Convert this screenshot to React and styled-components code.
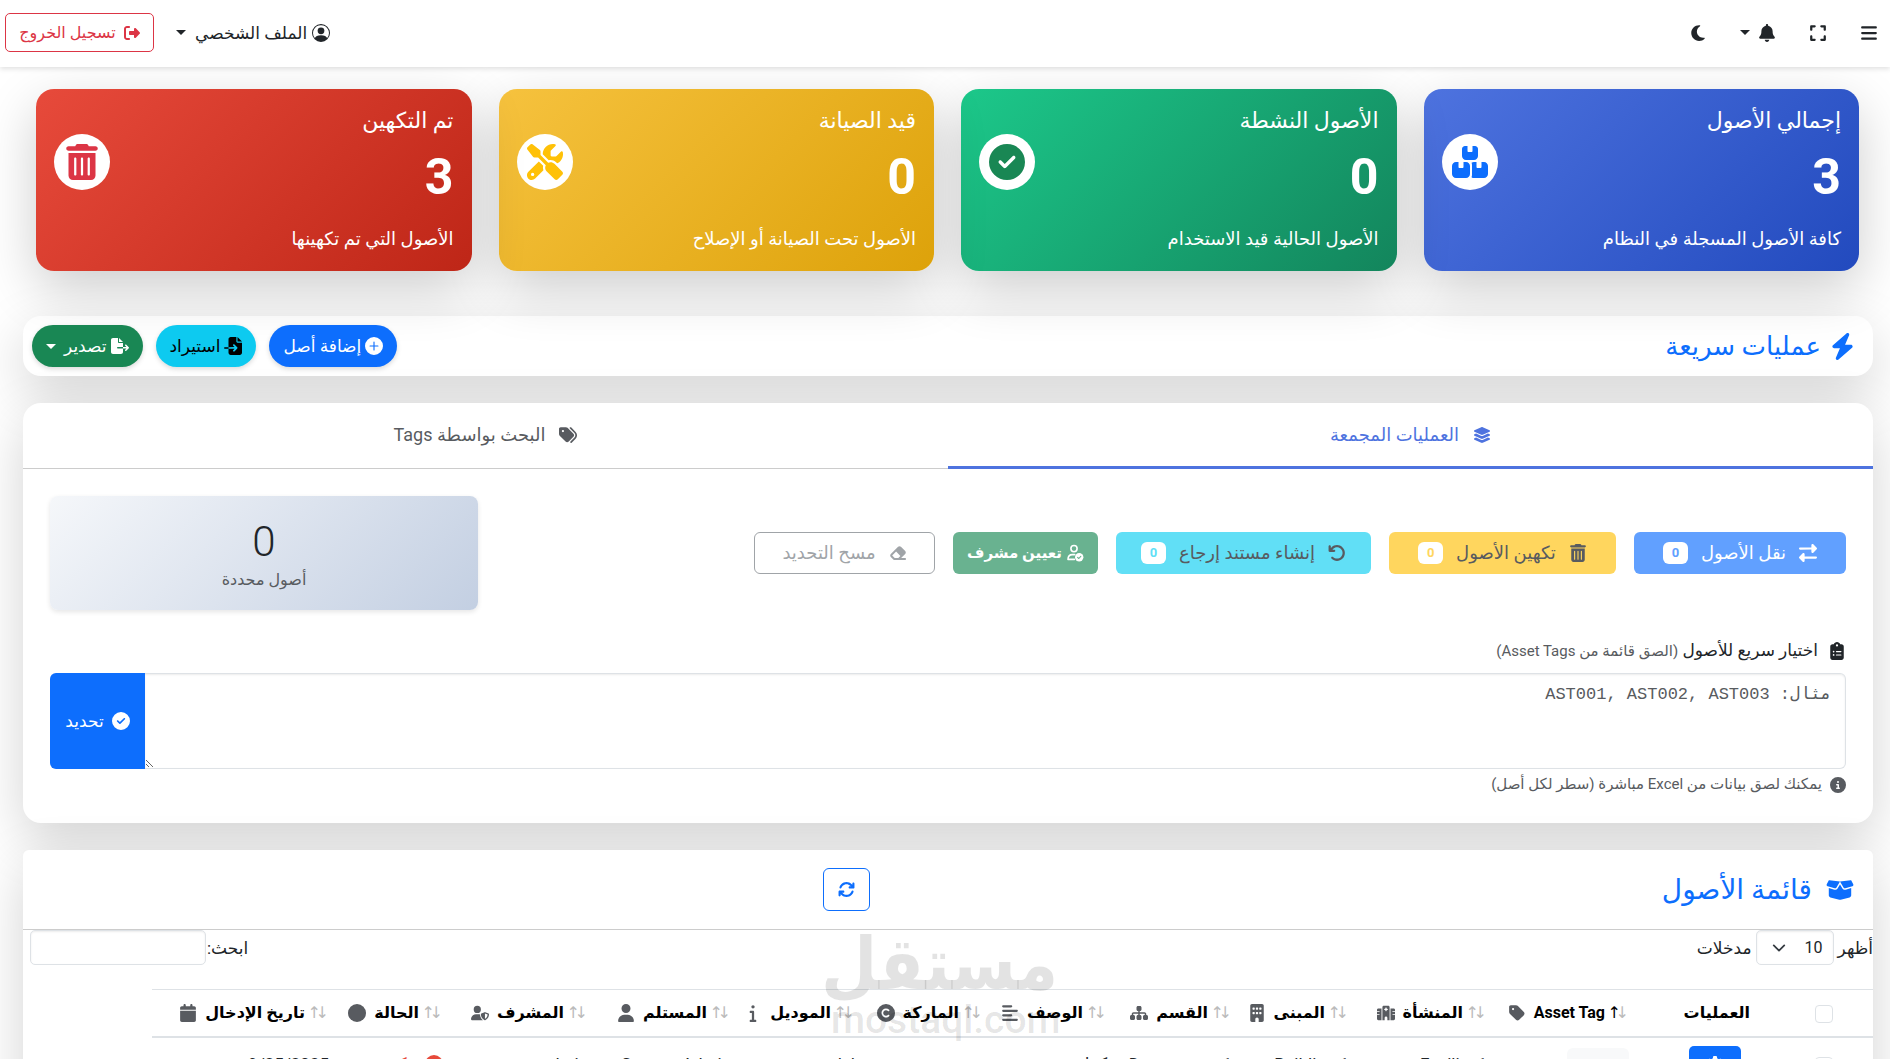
import React, { useState } from 'react';
import styled, { createGlobalStyle, css } from 'styled-components';
import {
  FaArrowRotateLeft, FaArrowsRotate, FaBars, FaBell, FaBolt, FaBoxOpen, FaBoxesStacked,
  FaBuilding, FaCalendar, FaCircle, FaCircleCheck, FaCircleInfo,
  FaClipboardList, FaCopyright, FaEraser, FaExpand, FaFileExport, FaFileImport, FaGear,
  FaHospital, FaInfo, FaLayerGroup, FaMoon, FaRightFromBracket, FaRightLeft, FaScrewdriverWrench,
  FaSitemap, FaTag, FaTags, FaTrashCan, FaUser, FaUserShield, FaAlignLeft,
} from 'react-icons/fa6';
import { BsPersonCircle, BsPlusCircleFill } from 'react-icons/bs';

const GlobalStyle = createGlobalStyle`
  *, *::before, *::after {
    box-sizing: border-box;
  }
  body {
    margin: 0;
    height: 100vh;
    overflow: hidden;
    background: #fff;
    color: #212529;
    font: 17px/24px Roboto, 'DejaVu Sans', sans-serif;
  }
  button, input, select {
    font: inherit;
  }
  svg {
    flex: none;
  }
`;

// outlined user with a filled check badge
function UserCheck({ size }) {
  return (
    <svg width={size} height={size} viewBox="0 0 18 18" fill="none" stroke="currentColor" strokeWidth="1.6" strokeLinecap="round" aria-hidden="true">
      <circle cx="8" cy="4.6" r="3.1" />
      <path d="M8.6 10.6H6.4C3.6 10.6 2 12.4 2 15.4h6.4" strokeLinejoin="round" />
      <circle cx="13.2" cy="13.2" r="4.2" fill="currentColor" stroke="none" />
      <path d="m11.6 13.3 1.2 1.2 2-2.2" stroke="#69b290" strokeWidth="1.1" strokeLinejoin="round" />
    </svg>
  );
}

const stats = [
  { title: 'إجمالي الأصول', value: 3, note: 'كافة الأصول المسجلة في النظام', icon: FaBoxesStacked, color: '#0d6efd', from: '#4e73df', to: '#224abe' },
  { title: 'الأصول النشطة', value: 0, note: 'الأصول الحالية قيد الاستخدام', icon: FaCircleCheck, color: '#198754', from: '#1cc88a', to: '#13855c' },
  { title: 'قيد الصيانة', value: 0, note: 'الأصول تحت الصيانة أو الإصلاح', icon: FaScrewdriverWrench, color: '#ffc107', from: '#f6c23e', to: '#dda20a' },
  { title: 'تم التكهين', value: 3, note: 'الأصول التي تم تكهينها', icon: FaTrashCan, color: '#dc3545', from: '#e74a3b', to: '#be2617' },
];

const bulkActions = [
  { label: 'نقل الأصول', icon: FaRightLeft, bg: '#61a0ff', fg: '#fff', width: 212, count: true },
  { label: 'تكهين الأصول', icon: FaTrashCan, bg: '#ffd65e', fg: '#585b60', width: 227, count: true },
  { label: 'إنشاء مستند إرجاع', icon: FaArrowRotateLeft, bg: '#61dff6', fg: '#585b60', width: 255, count: true },
  { label: 'تعيين مشرف', icon: UserCheck, bg: '#69b290', fg: '#fff', width: 145, bold: true },
  { label: 'مسح التحديد', icon: FaEraser, bg: '#fff', fg: '#a0a4a8', width: 181, outline: true },
];

const columns = [
  { label: 'Asset Tag', icon: FaTag, width: 142, sorted: true },
  { label: 'المنشأة', icon: FaHospital, width: 138 },
  { label: 'المبنى', icon: FaBuilding, width: 117 },
  { label: 'القسم', icon: FaSitemap, width: 125 },
  { label: 'الوصف', icon: FaAlignLeft, width: 124 },
  { label: 'الماركة', icon: FaCopyright, width: 128 },
  { label: 'الموديل', icon: FaInfo, width: 124 },
  { label: 'المستلم', icon: FaUser, width: 143 },
  { label: 'المشرف', icon: FaUserShield, width: 145 },
  { label: 'الحالة', icon: FaCircle, width: 114 },
  { label: 'تاريخ الإدخال', icon: FaCalendar, width: 186 },
];

const row = ['AST001', 'Facility 1', 'Building 1', 'Department 1', 'كراسي', 'test', 'model', 'System Admin', 'admin', 'مكهن', '9/25/2025'];

export default function App() {
  const [tab, setTab] = useState('bulk');
  const [tags, setTags] = useState('');

  return (
    <Page dir="rtl" lang="ar">
      <GlobalStyle />
      <Navbar>
        <NavGroup>
          <IconButton type="button" aria-label="القائمة"><FaBars size={18} /></IconButton>
          <IconButton type="button" aria-label="ملء الشاشة"><FaExpand size={18} /></IconButton>
          <IconButton type="button" aria-label="الإشعارات">
            <FaBell size={18} />
            <Caret />
          </IconButton>
          <IconButton type="button" aria-label="الوضع الليلي"><FaMoon size={18} /></IconButton>
        </NavGroup>
        <ProfileGroup>
          <ProfileButton type="button">
            <BsPersonCircle size={18} />
            الملف الشخصي
            <Caret />
          </ProfileButton>
          <LogoutButton type="button">
            <FaRightFromBracket size={16} />
            تسجيل الخروج
          </LogoutButton>
        </ProfileGroup>
      </Navbar>

      <Main>
        <StatGrid>
          {stats.map(({ icon: Icon, ...s }) => (
            <StatCard key={s.title} $from={s.from} $to={s.to}>
              <div>
                <StatTitle>{s.title}</StatTitle>
                <StatValue>{s.value}</StatValue>
                <StatNote>{s.note}</StatNote>
              </div>
              <StatIcon $color={s.color}><Icon size={36} /></StatIcon>
            </StatCard>
          ))}
        </StatGrid>

        <QuickBar>
          <SectionTitle>
            <FaBolt size={27} />
            عمليات سريعة
          </SectionTitle>
          <QuickActions>
            <PillButton type="button" $bg="#0d6efd" $fg="#fff">
              <BsPlusCircleFill size={18} />
              إضافة أصل
            </PillButton>
            <PillButton type="button" $bg="#0dcaf0" $fg="#000">
              <FaFileImport size={18} />
              استيراد
            </PillButton>
            <PillButton type="button" $bg="#198754" $fg="#fff">
              <FaFileExport size={18} />
              تصدير
              <Caret />
            </PillButton>
          </QuickActions>
        </QuickBar>

        <Panel>
          <Tabs role="tablist">
            <Tab type="button" role="tab" aria-selected={tab === 'bulk'} $active={tab === 'bulk'} onClick={() => setTab('bulk')}>
              <FaLayerGroup size={18} />
              العمليات المجمعة
            </Tab>
            <Tab type="button" role="tab" aria-selected={tab === 'tags'} $active={tab === 'tags'} onClick={() => setTab('tags')}>
              <FaTags size={18} />
              البحث بواسطة Tags
            </Tab>
          </Tabs>

          <PanelBody>
            <BulkRow>
              <BulkActions>
                {bulkActions.map(({ icon: Icon, ...a }) => (
                  <BulkButton key={a.label} type="button" $bg={a.bg} $fg={a.fg} $width={a.width} $outline={a.outline} $bold={a.bold}>
                    <Icon size={18} />
                    <span>{a.label}</span>
                    {a.count && <Count $fg={a.bg}>0</Count>}
                  </BulkButton>
                ))}
              </BulkActions>
              <Selected>
                <SelectedValue>0</SelectedValue>
                <SelectedLabel>أصول محددة</SelectedLabel>
              </Selected>
            </BulkRow>

            <TagsLabel htmlFor="tags">
              <FaClipboardList size={18} />
              <span>
                اختيار سريع للأصول
                {' '}
                <small>(الصق قائمة من Asset Tags)</small>
              </span>
            </TagsLabel>
            <TagsGroup>
              <TagsInput
                id="tags"
                placeholder="مثال: AST001, AST002, AST003"
                value={tags}
                onChange={(e) => setTags(e.target.value)}
              />
              <SelectButton type="button">
                <FaCircleCheck size={18} />
                تحديد
              </SelectButton>
            </TagsGroup>
            <Hint>
              <FaCircleInfo size={16} />
              يمكنك لصق بيانات من Excel مباشرة (سطر لكل أصل)
            </Hint>
          </PanelBody>
        </Panel>

        <ListPanel>
          <ListHeader>
            <SectionTitle $wide>
              <FaBoxOpen size={28} />
              قائمة الأصول
            </SectionTitle>
            <RefreshButton type="button" aria-label="تحديث"><FaArrowsRotate size={17} /></RefreshButton>
          </ListHeader>

          <Controls>
            <ControlLabel>
              أظهر
              <LengthSelect defaultValue="10">
                <option>10</option>
                <option>25</option>
                <option>50</option>
              </LengthSelect>
              مدخلات
            </ControlLabel>
            <SearchLabel>
              ابحث:
              <SearchInput type="search" />
            </SearchLabel>
          </Controls>

          <Table>
            <colgroup>
              <Col $width={98} />
              <Col $width={137} />
              {columns.map((c) => <Col key={c.label} $width={c.width} />)}
            </colgroup>
            <thead>
              <tr>
                <Th $center><Checkbox type="checkbox" aria-label="تحديد الكل" /></Th>
                <Th $inset>العمليات</Th>
                {columns.map(({ icon: Icon, ...c }) => (
                  <Th key={c.label}>
                    <HeadCell>
                      <SortArrows $sorted={c.sorted}>
                        <span>↓</span>
                        <span>↑</span>
                      </SortArrows>
                      {c.label}
                      <Icon size={18} />
                    </HeadCell>
                  </Th>
                ))}
              </tr>
            </thead>
            <tbody>
              <tr>
                <Td $center><Checkbox type="checkbox" aria-label="تحديد الأصل" /></Td>
                <Td $inset>
                  <RowButton type="button" aria-label="خيارات"><FaGear size={16} /></RowButton>
                </Td>
                {row.map((value, i) => (
                  <Td key={columns[i].label}>
                    {i === 0 && <TagBadge>{value}</TagBadge>}
                    {i === 9 && (
                      <Status>
                        <StatusDot />
                        {value}
                      </Status>
                    )}
                    {i !== 0 && i !== 9 && value}
                  </Td>
                ))}
              </tr>
            </tbody>
          </Table>
        </ListPanel>
      </Main>

      <Watermark aria-hidden="true">
        <WatermarkName>مستقل</WatermarkName>
        <WatermarkUrl dir="ltr">mostaql.com</WatermarkUrl>
      </Watermark>
    </Page>
  );
}

const Page = styled.div`
  position: relative;
  height: 100vh;
  overflow: hidden;
`;

const Navbar = styled.header`
  position: relative;
  z-index: 1;
  display: flex;
  align-items: center;
  justify-content: space-between;
  height: 67px;
  padding: 0 12px 2px 5px;
  background: #fff;
  box-shadow: 0 2px 5px rgba(0, 0, 0, .12);
`;

const NavGroup = styled.div`
  display: flex;
  align-items: center;
  gap: 33px;
`;

const ProfileGroup = styled(NavGroup)`
  gap: 22px;
`;

const plainButton = css`
  display: flex;
  align-items: center;
  border: 0;
  padding: 0;
  background: none;
  color: #212529;
  cursor: pointer;
`;

const IconButton = styled.button`
  ${plainButton}
  gap: 4px;
`;

const ProfileButton = styled.button`
  ${plainButton}
  gap: 5px;
`;

const Caret = styled.span`
  margin-right: 4px;
  border: 5px solid transparent;
  border-top-color: currentColor;
  border-bottom: 0;
`;

const LogoutButton = styled.button`
  ${plainButton}
  justify-content: center;
  gap: 8px;
  width: 149px;
  height: 39px;
  border: 1px solid #dc3545;
  border-radius: 5px;
  color: #dc3545;
  font-size: 16px;
`;

const Main = styled.main`
  padding: 22px 17px 0 23px;
`;

const StatGrid = styled.section`
  display: grid;
  grid-template-columns: repeat(4, 1fr);
  gap: 27px;
  padding: 0 14px 0 13px;
  margin-bottom: 45px;
`;

const StatCard = styled.article`
  display: flex;
  justify-content: space-between;
  height: 182px;
  padding: 18px;
  border-radius: 18px;
  background: linear-gradient(135deg, ${(p) => p.$from}, ${(p) => p.$to});
  box-shadow: 0 18px 54px rgba(0, 0, 0, .2);
  color: #fff;
`;

const StatTitle = styled.h2`
  margin: 0;
  font-size: 22px;
  font-weight: 400;
  line-height: 28px;
`;

const StatValue = styled.div`
  margin: 8px 0 16px;
  font-size: 50px;
  font-weight: 700;
  line-height: 68px;
`;

const StatNote = styled.p`
  margin: 0;
  font-size: 18px;
`;

const StatIcon = styled.div`
  display: flex;
  align-items: center;
  justify-content: center;
  width: 56px;
  height: 56px;
  margin-top: 27px;
  border-radius: 50%;
  background: #fff;
  color: ${(p) => p.$color};
`;

const QuickBar = styled.section`
  display: flex;
  align-items: center;
  justify-content: space-between;
  height: 60px;
  margin-bottom: 27px;
  padding: 0 17px 0 9px;
  border-radius: 18px;
  background: #fff;
  box-shadow: 0 18px 54px rgba(0, 0, 0, .175);
`;

const SectionTitle = styled.h3`
  display: flex;
  align-items: center;
  gap: ${(p) => (p.$wide ? 14 : 8)}px;
  margin: 0;
  color: #0d6efd;
  font-size: ${(p) => (p.$wide ? 28 : 26)}px;
  font-weight: 400;
  line-height: 32px;
`;

const QuickActions = styled.div`
  display: flex;
  gap: 13px;
`;

const PillButton = styled.button`
  display: flex;
  align-items: center;
  gap: 4px;
  height: 42px;
  padding: 0 14px;
  border: 0;
  border-radius: 21px;
  background: ${(p) => p.$bg};
  color: ${(p) => p.$fg};
  box-shadow: 0 2px 5px rgba(0, 0, 0, .15);
  cursor: pointer;
`;

const Panel = styled.section`
  margin-bottom: 27px;
  border-radius: 18px;
  background: #fff;
  box-shadow: 0 18px 54px rgba(0, 0, 0, .175);
`;

const Tabs = styled.div`
  display: flex;
  height: 66px;
  border-bottom: 1px solid #ccc;
`;

const Tab = styled.button`
  flex: 1;
  display: flex;
  align-items: center;
  justify-content: center;
  gap: 14px;
  margin-bottom: -1px;
  border: 0;
  border-bottom: 3px solid ${(p) => (p.$active ? '#4e73df' : 'transparent')};
  background: none;
  color: ${(p) => (p.$active ? '#4e73df' : '#585b60')};
  font-size: 18px;
  cursor: pointer;
`;

const PanelBody = styled.div`
  padding: 27px;
`;

const BulkRow = styled.div`
  display: flex;
  align-items: center;
  justify-content: space-between;
  margin-bottom: 27px;
`;

const BulkActions = styled.div`
  display: flex;
  gap: 18px;
`;

const BulkButton = styled.button`
  display: flex;
  align-items: center;
  justify-content: center;
  gap: ${(p) => (p.$bold ? 4 : 13)}px;
  width: ${(p) => p.$width}px;
  height: 42px;
  padding: 0;
  border: ${(p) => (p.$outline ? '1px solid #a0a4a8' : 0)};
  border-radius: 6px;
  background: ${(p) => p.$bg};
  color: ${(p) => p.$fg};
  font-size: ${(p) => (p.$bold ? 15 : 18)}px;
  font-weight: ${(p) => (p.$bold ? 700 : 400)};
  white-space: nowrap;
  cursor: pointer;
`;

const Count = styled.span`
  width: 25px;
  border-radius: 6px;
  background: #fff;
  color: ${(p) => p.$fg};
  font-size: 13px;
  font-weight: 700;
  line-height: 22px;
`;

const Selected = styled.div`
  width: 428px;
  height: 114px;
  padding-top: 20px;
  border-radius: 8px;
  background: linear-gradient(135deg, #f5f7fa, #c3cfe2);
  box-shadow: 0 2px 5px rgba(0, 0, 0, .1);
  text-align: center;
`;

const SelectedValue = styled.div`
  font-size: 42px;
  font-weight: 300;
  line-height: 52px;
`;

const SelectedLabel = styled.div`
  color: #585b60;
  font-size: 16px;
`;

const TagsLabel = styled.label`
  display: flex;
  align-items: center;
  gap: 10px;
  margin-bottom: 8px;
  line-height: 27px;

  small {
    color: #585b60;
    font-size: 15px;
  }
`;

const TagsGroup = styled.div`
  display: flex;
  height: 96px;
`;

const TagsInput = styled.textarea`
  flex: 1;
  padding: 9px 14px;
  border: 1px solid #dee2e6;
  border-left: 0;
  border-radius: 0 6px 6px 0;
  box-shadow: inset 0 1px 2px rgba(0, 0, 0, .075);
  font: 17px/24px 'Liberation Mono', 'DejaVu Sans Mono', monospace;
  resize: vertical;

  &::placeholder {
    color: #585b60;
  }
`;

const SelectButton = styled.button`
  ${plainButton}
  justify-content: center;
  gap: 8px;
  width: 95px;
  border-radius: 6px 0 0 6px;
  background: #0d6efd;
  color: #fff;
`;

const Hint = styled.p`
  display: flex;
  align-items: center;
  gap: 8px;
  margin: 4px 0 0;
  color: #585b60;
  font-size: 15px;
  line-height: 23px;
`;

const ListPanel = styled.section`
  min-height: 300px;
  border-radius: 6px;
  background: #fff;
  box-shadow: 0 18px 54px rgba(0, 0, 0, .175);
`;

const ListHeader = styled.div`
  display: grid;
  grid-template-columns: 1fr 1fr;
  align-items: center;
  height: 80px;
  padding: 0 19px;
  border-bottom: 1px solid #ccc;
`;

const RefreshButton = styled.button`
  ${plainButton}
  justify-content: center;
  width: 47px;
  height: 43px;
  margin-right: 78px;
  border: 1px solid #0d6efd;
  border-radius: 6px;
  color: #0d6efd;
`;

const Controls = styled.div`
  display: flex;
  justify-content: space-between;
  padding-left: 7px;
  margin-bottom: 24px;
`;

const ControlLabel = styled.label`
  display: flex;
  align-items: center;
  gap: 4px;
`;

const SearchLabel = styled(ControlLabel)`
  gap: 1px;
`;

const LengthSelect = styled.select`
  width: 78px;
  height: 35px;
  padding: 0 10px 0 36px;
  border: 1px solid #dee2e6;
  border-radius: 5px;
  appearance: none;
  background: #fff url("data:image/svg+xml,%3Csvg xmlns='http://www.w3.org/2000/svg' viewBox='0 0 16 16'%3E%3Cpath fill='none' stroke='%23343a40' stroke-linecap='round' stroke-linejoin='round' stroke-width='2' d='m2 5 6 6 6-6'/%3E%3C/svg%3E") no-repeat 15px center / 14px;
  box-shadow: inset 0 1px 2px rgba(0, 0, 0, .075);
  color: #212529;
  font-size: 16px;
`;

const SearchInput = styled.input`
  width: 176px;
  height: 35px;
  border: 1px solid #dee2e6;
  border-radius: 5px;
  box-shadow: inset 0 1px 2px rgba(0, 0, 0, .075);
`;

const Table = styled.table`
  width: 93%;
  border-collapse: collapse;
  table-layout: fixed;
`;

const Col = styled.col`
  width: ${(p) => p.$width}px;
`;

const insets = (p) => {
  if (p.$center) return 0;
  return p.$inset ? 25 : 9;
};

const cell = css`
  padding: 0 ${insets}px 0 0;
  text-align: ${(p) => (p.$center ? 'center' : 'right')};
  white-space: nowrap;
`;

const Th = styled.th`
  ${cell}
  height: 47px;
  border-top: 1px solid #dee2e6;
  border-bottom: 2px solid #dee2e6;
  color: #000;
  font-size: 16px;
  font-weight: 700;
`;

const Td = styled.td`
  ${cell}
  height: 54px;
`;

const HeadCell = styled.div`
  display: flex;
  align-items: center;
  gap: 8px;

  svg {
    color: #585b60;
  }
`;

const SortArrows = styled.span`
  display: flex;
  color: #bbb;
  font-weight: 400;

  span {
    width: 8px;
    text-align: center;
  }
  span:last-child {
    color: ${(p) => (p.$sorted ? '#000' : '#bbb')};
  }
`;

const Checkbox = styled.input`
  appearance: none;
  width: 18px;
  height: 18px;
  margin: 0;
  border: 1px solid #dee2e6;
  border-radius: 4px;
  background: #fff;
  vertical-align: middle;
`;

const RowButton = styled.button`
  ${plainButton}
  justify-content: center;
  width: 52px;
  height: 36px;
  margin-right: 9px;
  border-radius: 5px;
  background: #0d6efd;
  color: #fff;
`;

const TagBadge = styled.span`
  display: inline-block;
  padding: 6px 8px 2px;
  border-radius: 6px;
  background: #f8f9fa;
  font-size: 13px;
`;

const Status = styled.span`
  display: flex;
  align-items: center;
  gap: 8px;
  color: #e74a3b;
`;

const StatusDot = styled.span`
  width: 18px;
  height: 18px;
  border-radius: 50%;
  background: #e74a3b;
`;

const Watermark = styled.div`
  position: absolute;
  z-index: 2;
  right: 832px;
  bottom: 20px;
  width: 227px;
  color: rgba(0, 0, 0, .11);
  font-family: Roboto, 'DejaVu Sans Condensed', sans-serif;
  text-align: center;
  pointer-events: none;
`;

const WatermarkName = styled.div`
  font-size: 72px;
  font-weight: 700;
  line-height: 72px;
`;

const WatermarkUrl = styled.div`
  font-size: 39px;
  font-weight: 500;
  line-height: 38px;
`;
